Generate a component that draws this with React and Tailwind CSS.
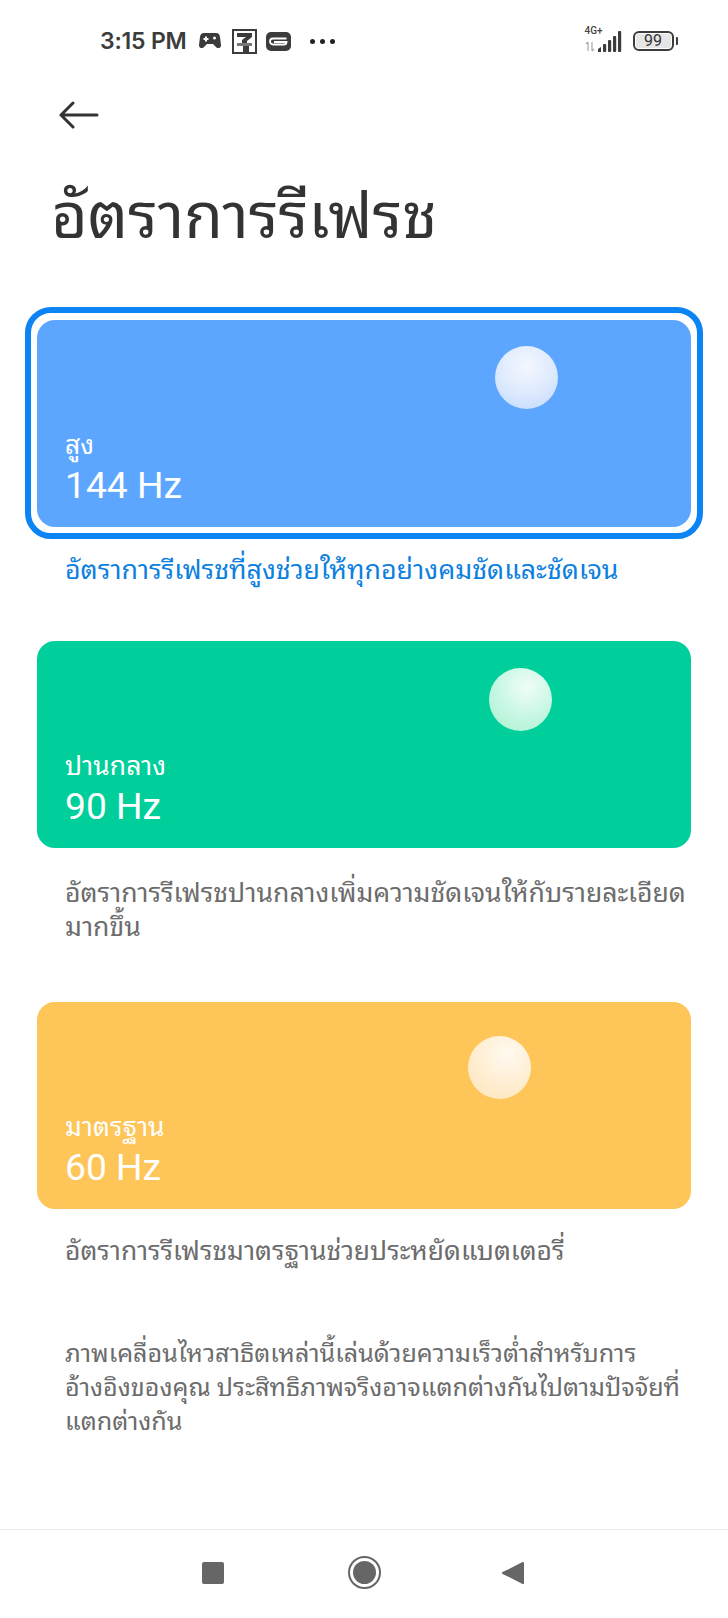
import React from "react";

function Card({ label, hz, bg, ball }) {
  return (
    <div className={`relative flex h-[207px] w-[654px] flex-col justify-end rounded-[18px] pb-[19px] pl-[28px] text-white ${bg}`}>
      <div className={`absolute h-[63px] w-[63px] rounded-full ${ball}`} />
      <div className="text-[26.5px] leading-[30px]">{label}</div>
      <div className="pt-[2px] text-[37.2px] leading-[46px]">{hz}</div>
    </div>
  );
}

export default function App() {
  return (
    <div className="flex h-[1618px] w-[728px] flex-col overflow-hidden bg-white font-['Roboto','Noto_Sans_Thai_Looped','Loma','Noto_Sans','Noto_Sans_Thai','DejaVu_Sans',sans-serif]">
      {/* status bar */}
      <div className="flex h-[80px] items-center justify-between pl-[100px] pr-[50px] pt-[2px]">
        <div className="flex items-center text-[#3c3c3c]">
          <span className="text-[23px] font-semibold font-['Inter','Roboto',sans-serif] tracking-[-0.2px]">3:15 PM</span>
          <svg className="ml-[12px]" width="22" height="18" viewBox="0 0 22 18" fill="#3c3c3c">
            <path fillRule="evenodd" d="M5 1h12c2.400 0 3.700 1.500 4 4l1 8c.3 2.500-2.500 4-4.500 2.500L14 12H8l-3.500 3.500C2.500 17 -.3 15.500 0 13l1-8c.3-2.500 1.600-4 4-4zM6 4.500v1.500H4.500v2H6v1.500h2V8h1.500V6H8V4.500zM15.500 4.500a1.500 1.500 0 100 3 1.500 1.500 0 000-3z" />
          </svg>
          <svg className="ml-[11px]" width="25" height="25" viewBox="0 0 25 25">
            <rect x="1" y="1" width="23" height="23" fill="#fff" stroke="#3c3c3c" strokeWidth="2" />
            <path d="M5 4h15v4l-5 4v3h-5v-4l4-3H5z" fill="#3c3c3c" />
            <rect x="5" y="14" width="15" height="3" fill="#777" />
            <rect x="11" y="17" width="6" height="6" fill="#3c3c3c" />
          </svg>
          <svg className="ml-[9px]" width="25" height="19" viewBox="0 0 25 19">
            <rect width="25" height="19" rx="5" fill="#3c3c3c" />
            <path d="M20.500 6.500H7A3 3 0 004 9.500v0A3 3 0 007 12.500h11a2.500 2.500 0 002.500-2.500H8" fill="none" stroke="#fff" strokeWidth="1.800" />
          </svg>
          <div className="ml-[19px] flex gap-[5px]">
            <span className="h-[5px] w-[5px] rounded-full bg-[#222]" />
            <span className="h-[5px] w-[5px] rounded-full bg-[#222]" />
            <span className="h-[5px] w-[5px] rounded-full bg-[#222]" />
          </div>
        </div>
        <div className="flex items-center">
          <div className="relative h-[26px] w-[42px]">
            <span className="absolute left-0 top-[-3px] text-[10px] font-medium leading-[12px] text-[#444]">4G+</span>
            <svg className="absolute left-0 top-0" width="42" height="26" viewBox="0 0 42 26">
              <path d="M3 14v9M1 16l2-2M7 23v-9M7 23l2-2" stroke="#aaa" strokeWidth="1.200" fill="none" />
              <path d="M13 21l3-2v5h-3z" fill="#3c3c3c" />
              <rect x="18" y="16" width="3.200" height="8" rx="1" fill="#3c3c3c" />
              <rect x="23" y="12" width="3.200" height="12" rx="1" fill="#3c3c3c" />
              <rect x="28" y="8" width="3.200" height="16" rx="1" fill="#3c3c3c" />
              <rect x="33" y="3" width="3.200" height="21" rx="1" fill="#3c3c3c" />
            </svg>
          </div>
          <div className="ml-[6px] flex items-center">
            <div className="flex h-[20px] w-[41px] items-center rounded-[6px] border-[2.5px] border-[#3c3c3c] p-[1px]">
              <div className="flex h-full w-full items-center justify-center rounded-[2px] bg-[#e6e6e6] text-[16px] leading-none text-[#333]">99</div>
            </div>
            <div className="ml-[2px] h-[8px] w-[2.500px] rounded-r-[1px] bg-[#3c3c3c]" />
          </div>
        </div>
      </div>

      {/* back arrow */}
      <div className="pl-[59px] pt-[21px]">
        <svg className="block" width="40" height="28" viewBox="0 0 40 28" fill="none" stroke="#333" strokeWidth="3" strokeLinecap="round" strokeLinejoin="round">
          <path d="M38 14H2M14 2L2 14l12 12" />
        </svg>
      </div>

      {/* title */}
      <h1 className="pl-[51px] pt-[53px] text-[63px] font-normal leading-[70px] text-[#333]">อัตราการรีเฟรช</h1>

      {/* options */}
      <div className="flex flex-col pl-[25px] pt-[55px]">
        <div className="w-[678px] rounded-[26px] border-[6px] border-[#0d84f4] bg-white px-[6px] pb-[6px] pt-[7px]">
          <Card label="สูง" hz="144 Hz" bg="bg-[#5ca6ff]" ball="left-[458px] top-[26px] bg-[radial-gradient(circle_at_50%_31%,#f4f8ff_0%,#dce9fd_55%,#c0d8fb_100%)]" />
        </div>
        <p className="pl-[40px] pt-[14px] text-[26.75px] leading-[34px] text-[#0d7fe0]">อัตราการรีเฟรชที่สูงช่วยให้ทุกอย่างคมชัดและชัดเจน</p>

        <div className="ml-[12px] mt-[54px]">
          <Card label="ปานกลาง" hz="90 Hz" bg="bg-[#00cf9b]" ball="left-[452px] top-[27px] bg-[radial-gradient(circle_at_60%_30%,#f0fdf6_0%,#c8f7e4_50%,#a8f0cc_100%)]" />
        </div>
        <p className="w-[690px] whitespace-nowrap pl-[40px] pt-[28px] text-[26.6px] leading-[34px] text-[#6c6c6c]">อัตราการรีเฟรชปานกลางเพิ่มความชัดเจนให้กับรายละเอียด<br />มากขึ้น</p>

        <div className="ml-[12px] mt-[58px]">
          <Card label="มาตรฐาน" hz="60 Hz" bg="bg-[#fec558]" ball="left-[431px] top-[34px] bg-[radial-gradient(circle_at_62%_28%,#fffaf0_0%,#ffedd0_55%,#fde4b4_100%)]" />
        </div>
        <p className="pl-[40px] pt-[25px] text-[26.45px] leading-[34px] text-[#6c6c6c]">อัตราการรีเฟรชมาตรฐานช่วยประหยัดแบตเตอรี่</p>
        <p className="w-[690px] whitespace-nowrap pl-[40px] pt-[69px] text-[25.15px] leading-[34px] text-[#6c6c6c]">ภาพเคลื่อนไหวสาธิตเหล่านี้เล่นด้วยความเร็วต่ำสำหรับการ<br />อ้างอิงของคุณ ประสิทธิภาพจริงอาจแตกต่างกันไปตามปัจจัยที่<br />แตกต่างกัน</p>
      </div>

      {/* nav bar */}
      <div className="mt-auto flex h-[89px] items-center border-t border-[#ececec] pl-[202px] pb-[3px]">
        <div className="h-[22px] w-[22px] rounded-[2px] bg-[#666]" />
        <div className="ml-[124px] flex h-[33px] w-[33px] items-center justify-center rounded-full border-[2.5px] border-[#666]">
          <div className="h-[23px] w-[23px] rounded-full bg-[#666]" />
        </div>
        <svg className="ml-[121px]" width="22" height="24" viewBox="0 0 22 24" fill="#666" stroke="#666" strokeWidth="2" strokeLinejoin="round">
          <path d="M21 2L1 12l20 10z" />
        </svg>
      </div>
    </div>
  );
}
